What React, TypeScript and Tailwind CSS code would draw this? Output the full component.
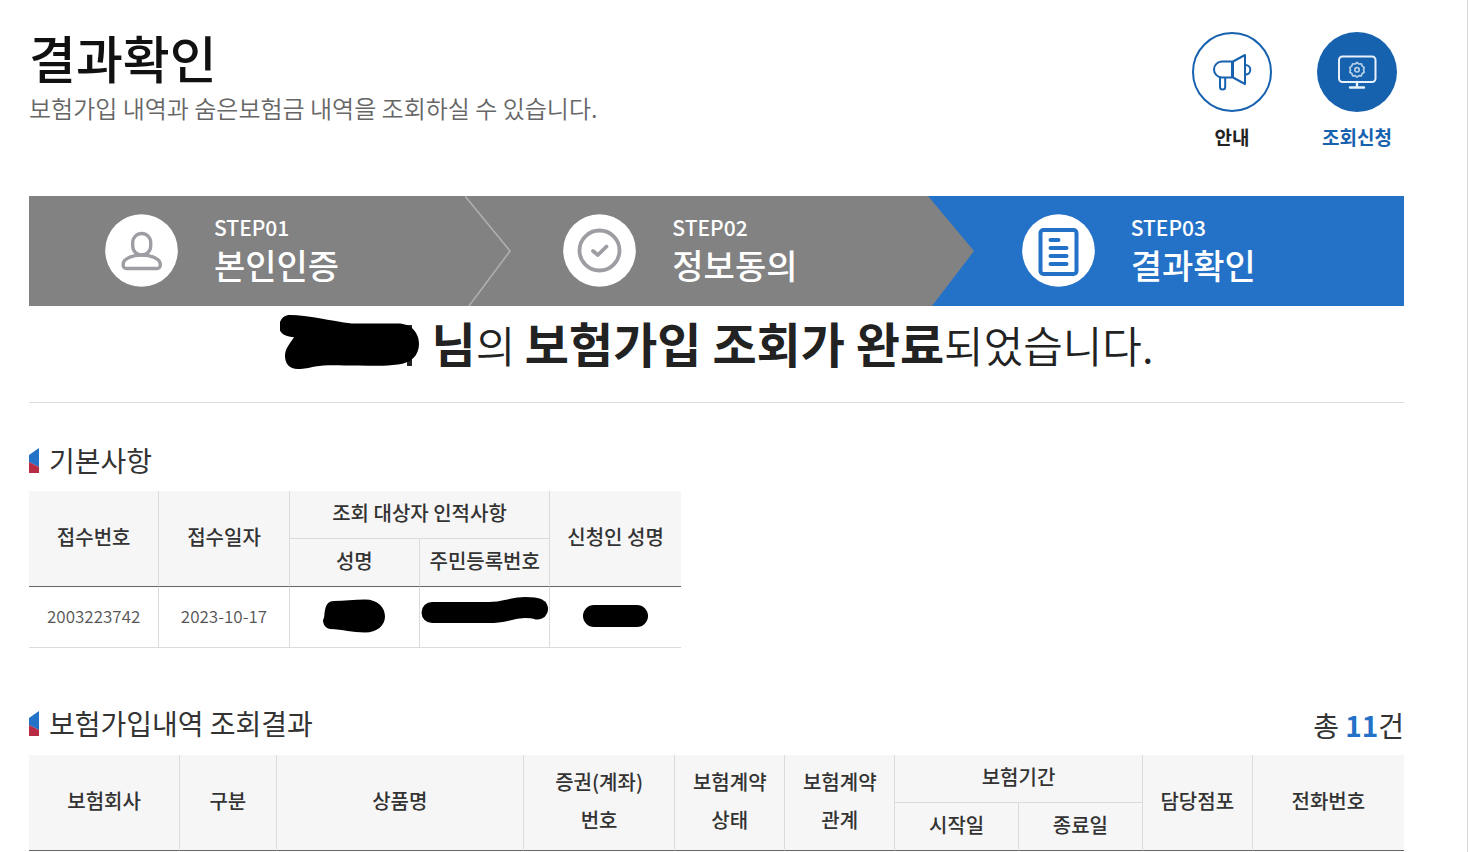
import type { ReactNode } from 'react'

const steps = [
  { no: 'STEP01', name: '본인인증', icon: <PersonIcon />, active: false },
  { no: 'STEP02', name: '정보동의', icon: <CheckIcon />, active: false },
  { no: 'STEP03', name: '결과확인', icon: <DocumentIcon />, active: true },
]

function MegaphoneIcon() {
  return (
    <svg viewBox="0 0 80 80" className="w-20 h-20" fill="none" stroke="#1762ae" strokeWidth="2" strokeLinejoin="round" aria-hidden="true">
      <circle cx="40" cy="40" r="39" fill="#fff" />
      <path d="M40 29.500H30a8 8 0 0 0-8 8 8 8 0 0 0 8 8h10z" />
      <path d="M41 29.500 53 23v29L41 45.500z" />
      <path d="M53.500 33a4.800 4.800 0 0 1 0 9.600" />
      <path d="M28 46v9a2.600 2.600 0 0 0 5.200 0v-9" />
    </svg>
  )
}

function MonitorIcon() {
  return (
    <svg viewBox="0 0 80 80" className="w-20 h-20" fill="none" stroke="#e8f1fa" strokeWidth="2" strokeLinecap="round" aria-hidden="true">
      <circle cx="40" cy="40" r="40" fill="#1762ae" stroke="none" />
      <rect x="22" y="24.500" width="36.500" height="25.500" rx="3.500" />
      <path d="M40 50v5.500M33 55.500h14" strokeWidth="2.400" />
      <path
        d="M40 30.500l1.900 1.500 2.500-.2.800 2.300 2 1.300-.7 2.400.7 2.400-2 1.300-.8 2.300-2.500-.2L40 45.100l-1.900-1.500-2.500.2-.8-2.300-2-1.300.7-2.400-.7-2.400 2-1.300.8-2.300 2.500.2z"
        stroke="#b4cee8"
        strokeWidth="1.700"
        strokeLinejoin="round"
      />
      <circle cx="40" cy="37.800" r="2.200" stroke="#b4cee8" strokeWidth="1.700" />
    </svg>
  )
}

function PersonIcon() {
  return (
    <svg viewBox="0 0 73 73" className="w-[73px] h-[73px]" fill="none" stroke="#9d9da3" strokeWidth="3.400" aria-hidden="true">
      <circle cx="36.500" cy="36.500" r="36.300" fill="#fff" stroke="none" />
      <rect x="27.700" y="19.500" width="18" height="21.500" rx="9" />
      <path d="M36.700 41c9 0 18.500 3.500 18.500 9v1.500a3 3 0 0 1-3 3H21.200a3 3 0 0 1-3-3V50c0-5.500 9.500-9 18.500-9z" />
    </svg>
  )
}

function CheckIcon() {
  return (
    <svg viewBox="0 0 73 73" className="w-[73px] h-[73px]" fill="none" stroke="#9d9da3" strokeWidth="3.800" aria-hidden="true">
      <circle cx="36.500" cy="36.500" r="36.300" fill="#fff" stroke="none" />
      <circle cx="36.500" cy="36.500" r="20" />
      <path d="M30 37l4.800 4 8.700-8.500" strokeLinecap="round" strokeLinejoin="round" />
    </svg>
  )
}

function DocumentIcon() {
  return (
    <svg viewBox="0 0 73 73" className="w-[73px] h-[73px]" fill="none" stroke="#2471c8" strokeWidth="4" strokeLinecap="round" aria-hidden="true">
      <circle cx="36.500" cy="36.500" r="36.300" fill="#fff" stroke="none" />
      <rect x="18.500" y="16" width="36" height="44" rx="3" />
      <path d="M28.500 26h8M28.500 34h16M28.500 42h16M28.500 50h16" />
    </svg>
  )
}

function SectionTitle({ children }: { children: ReactNode }) {
  return (
    <h2 className="flex items-center gap-[10px] text-[28px] leading-[40px] text-[#333]">
      <svg viewBox="0 0 10 25" className="w-[10px] h-[25px]" aria-hidden="true">
        <path d="M0 7 10 0v19L0 14z" fill="#2471c8" />
        <path d="M0 14l10 5v6H0z" fill="#b82b45" />
      </svg>
      {children}
    </h2>
  )
}

function Th({ children, rowSpan, colSpan, last, top }: {
  children: ReactNode
  rowSpan?: number
  colSpan?: number
  last?: boolean
  top?: boolean
}) {
  return (
    <th
      rowSpan={rowSpan}
      colSpan={colSpan}
      className={`h-12 pb-[3px] bg-[#f6f6f6] border-b font-medium text-[20px] leading-[38px] whitespace-nowrap ${
        top ? 'border-b-[#dbdbdb]' : 'border-b-[#666]'
      } ${last ? '' : 'border-r border-r-[#dbdbdb]'}`}
    >
      {children}
    </th>
  )
}

function Td({ children, last }: { children: ReactNode; last?: boolean }) {
  return (
    <td className={`h-[61px] pb-[3px] border-b border-[#dbdbdb] text-center text-[17px] font-[350] text-[#555] ${last ? '' : 'border-r'}`}>
      {children}
    </td>
  )
}

export default function App() {
  return (
    <main className="min-h-screen overflow-hidden bg-white border-r border-[#dbdbdb] pl-[29px] pr-[63px] pt-8 font-['Noto_Sans_CJK_KR',sans-serif] text-[#333]">
      <header className="flex items-start justify-between">
        <div>
          <h1 className="text-[51px] leading-[50px] font-medium text-[#111]">결과확인</h1>
          <p className="text-[24px] leading-[52px] font-[350] text-[#666]">보험가입 내역과 숨은보험금 내역을 조회하실 수 있습니다.</p>
        </div>
        <nav className="flex gap-[45px] pr-[7px] text-[19px] leading-[26px] font-bold">
          <a href="#guide" className="flex flex-col items-center gap-3 text-[#222]">
            <MegaphoneIcon />
            안내
          </a>
          <a href="#apply" className="flex flex-col items-center gap-3 text-[#1762ae]">
            <MonitorIcon />
            조회신청
          </a>
        </nav>
      </header>

      <ol className="mt-[46px] grid grid-cols-3 bg-[#828282] text-white">
        {steps.map((step, i) => (
          <li
            key={step.no}
            className={`relative flex items-center gap-9 h-[110px] pb-[2px] pl-[76px] ${step.active ? 'bg-[#2471c8]' : ''}`}
          >
            {/* Flechas entre pasos */}
            {i === 0 && (
              <svg viewBox="0 0 46 110" className="absolute top-0 -right-6 w-[46px] h-[110px]" fill="none" stroke="#b0b0b0" strokeWidth="1.500" aria-hidden="true">
                <path d="M0 0l45 55L4 110" />
              </svg>
            )}
            {i === 1 && (
              <svg viewBox="0 0 46 110" className="absolute z-10 top-0 -right-7 w-[46px] h-[110px]" aria-hidden="true">
                <path d="M0 0h46v110H4z" fill="#2471c8" />
                <path d="M0 0l46 55L4 110H0z" fill="#828282" />
              </svg>
            )}
            {step.icon}
            <div className="pb-[2px]">
              <p className="text-[21px] leading-[32px] font-medium">{step.no}</p>
              <p className="text-[34px] leading-[44px] font-medium">{step.name}</p>
            </div>
          </li>
        ))}
      </ol>

      <div className="flex items-center justify-center gap-3 h-[97px] pb-[22px] border-b border-[#dbdbdb] text-[#222]">
        <svg viewBox="0 0 140 56" className="w-[140px] h-[56px]" aria-hidden="true">
          <path d="M127 10h5v41h-5z" fill="#222" />
          <path d="M10 0C28 0 50 6 72 8.500h46c13 0 21 9 21 20.500s-8 19-21 20.500c-14 2-26 1-40 1-20 0-32-1-43 1C28 53 25 54 18 54 9 54 5 48 5 41c0-8 5-12 9-19C5 22-1 18-1 11 0 4 4 0 10 0z" />
        </svg>
        <p className="text-[43px] leading-[60px] font-[350]">
          <strong className="text-[48px] font-bold">님</strong>의{' '}
          <strong className="text-[48px] font-bold">보험가입 조회가 완료</strong>되었습니다.
        </p>
      </div>

      <section className="mt-[37px]">
        <SectionTitle>기본사항</SectionTitle>
        <table className="mt-[11px] w-[47.4%] table-fixed border-separate border-spacing-0">
          <thead>
            <tr>
              <Th rowSpan={2}>접수번호</Th>
              <Th rowSpan={2}>접수일자</Th>
              <Th colSpan={2} top>조회 대상자 인적사항</Th>
              <Th rowSpan={2} last>신청인 성명</Th>
            </tr>
            <tr>
              <Th>성명</Th>
              <Th>주민등록번호</Th>
            </tr>
          </thead>
          <tbody>
            <tr>
              <Td>2003223742</Td>
              <Td>2023-10-17</Td>
              <Td>
                <svg viewBox="0 0 64 34" className="mx-auto w-[64px] h-[34px]" aria-hidden="true">
                  <path d="M12 2c10 0 20-1.500 31-1.500 13 0 20 8 20 17s-8 16-20 16c-13 0-22-3-35-3.500-5-1-7-5-7-9 2-3 1-6 2-10C4 5 7 2 12 2z" />
                </svg>
              </Td>
              <Td>
                <svg viewBox="0 0 128 37" className="mx-auto w-[128px] h-[37px]" fill="none" stroke="#000" strokeWidth="21" strokeLinecap="round" aria-hidden="true">
                  <path d="M11 15.500h57c16 0 24-5 36-5 6 0 9 0 12.500 1.500" />
                </svg>
              </Td>
              <Td last>
                <span className="block mx-auto w-[65px] h-[22px] rounded-full bg-black" />
              </Td>
            </tr>
          </tbody>
        </table>
      </section>

      <section className="mt-[53px]">
        <div className="flex items-center justify-between">
          <SectionTitle>보험가입내역 조회결과</SectionTitle>
          <p className="pt-1 text-[28px] leading-[40px]">
            총 <strong className="font-bold text-[#2471c8]">11</strong>건
          </p>
        </div>
        <table className="mt-[10px] w-full table-fixed border-separate border-spacing-0">
          <colgroup>
            <col className="w-[11%]" />
            <col className="w-[7%]" />
            <col className="w-[18%]" />
            <col className="w-[11%]" />
            <col className="w-[8%]" />
            <col className="w-[8%]" />
            <col className="w-[9%]" />
            <col className="w-[9%]" />
            <col className="w-[8%]" />
            <col className="w-[11%]" />
          </colgroup>
          <thead>
            <tr>
              <Th rowSpan={2}>보험회사</Th>
              <Th rowSpan={2}>구분</Th>
              <Th rowSpan={2}>상품명</Th>
              <Th rowSpan={2}>증권(계좌)<br />번호</Th>
              <Th rowSpan={2}>보험계약<br />상태</Th>
              <Th rowSpan={2}>보험계약<br />관계</Th>
              <Th colSpan={2} top>보험기간</Th>
              <Th rowSpan={2}>담당점포</Th>
              <Th rowSpan={2} last>전화번호</Th>
            </tr>
            <tr>
              <Th>시작일</Th>
              <Th>종료일</Th>
            </tr>
          </thead>
        </table>
      </section>
    </main>
  )
}
